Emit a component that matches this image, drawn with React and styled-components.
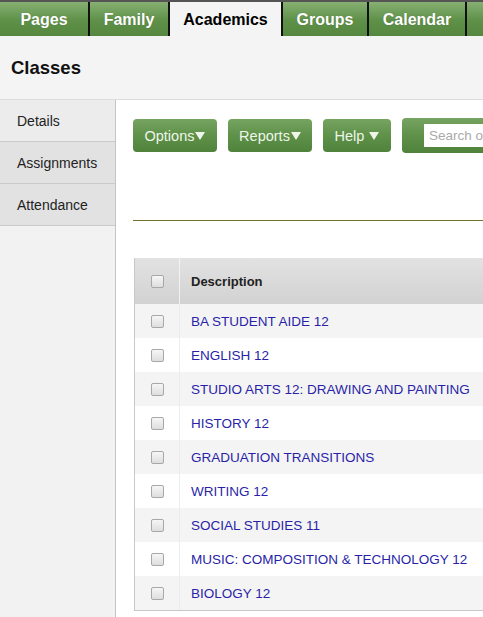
import React from "react";
import styled, { createGlobalStyle } from "styled-components";

const GlobalStyle = createGlobalStyle`
  html, body {
    margin: 0;
    padding: 0;
    background: #f4f4f4;
    font-family: "Liberation Sans", Arial, sans-serif;
    overflow: hidden;
  }
`;

const Page = styled.div`
  width: 483px;
  height: 617px;
  overflow: hidden;
  background: #f4f4f4;
`;

const TabBar = styled.nav`
  display: flex;
  height: 34px;
  border-top: 2px solid #555;
  background: linear-gradient(#86b072, #5e9048 55%, #558740);
`;

const Tab = styled.div`
  display: flex;
  align-items: center;
  justify-content: center;
  flex: none;
  width: ${(p) => p.$w}px;
  padding-top: 2px;
  box-sizing: border-box;
  border-right: 2px solid #111;
  font-size: 16px;
  font-weight: bold;
  color: ${(p) => (p.$active ? "#000" : "#fff")};
  background: ${(p) => (p.$active ? "#f4f4f4" : "transparent")};
  text-shadow: ${(p) => (p.$active ? "none" : "0 0 1px rgba(0,0,0,0.25)")};
`;

const PageHeader = styled.header`
  height: 64px;
  display: flex;
  align-items: center;
  padding-left: 11px;
  font-size: 18.5px;
  font-weight: bold;
  color: #111;
  border-bottom: 1px solid #dcdcdc;
  box-sizing: border-box;
`;

const Body = styled.div`
  display: flex;
  height: 517px;
`;

const Sidebar = styled.aside`
  flex: none;
  width: 115px;
  border-right: 1px solid #c4c4c4;
  background: #f2f2f2;
`;

const SideItem = styled.div`
  height: 41px;
  display: flex;
  align-items: center;
  padding-left: 17px;
  font-size: 14px;
  color: #222;
  background: ${(p) => (p.$first ? "#ececec" : "#e2e2e2")};
  border-bottom: 1px solid #cacaca;
`;

const Content = styled.main`
  flex: 1;
  background: #fff;
  padding: 18px 0 0 17px;
  overflow: hidden;
`;

const Toolbar = styled.div`
  display: flex;
  gap: 11px;
  align-items: center;
  width: 600px;
`;

const GreenButton = styled.div`
  flex: none;
  height: 33px;
  width: ${(p) => p.$w}px;
  box-sizing: border-box;
  border-radius: 4px;
  background: linear-gradient(#76a462, #5f9149 50%, #4f823b);
  display: flex;
  align-items: center;
  justify-content: center;
  color: #eef6ea;
  font-size: 14.5px;
`;

const Caret = styled.span`
  display: inline-block;
  width: 0;
  height: 0;
  border-left: 5px solid transparent;
  border-right: 5px solid transparent;
  border-top: 8px solid #eef6ea;
  margin-left: ${(p) => p.$gap}px;
  margin-top: 1px;
`;

const SearchWrap = styled.div`
  flex: none;
  height: 35px;
  width: 200px;
  box-sizing: border-box;
  border-radius: 4px;
  background: linear-gradient(#76a462, #5f9149 50%, #4f823b);
  display: flex;
  align-items: center;
  padding-left: 22px;
`;

const SearchInput = styled.div`
  height: 23px;
  width: 160px;
  background: #fff;
  color: #aaa;
  font-size: 13.5px;
  display: flex;
  align-items: center;
  padding-left: 5px;
  white-space: nowrap;
`;

const Rule = styled.div`
  width: 600px;
  height: 1px;
  background: #77732f;
  margin-top: 67px;
`;

const Table = styled.div`
  margin-top: 37px;
  margin-left: 1px;
  width: 600px;
  border-left: 1px solid #c8c8c8;
  border-bottom: 1px solid #c8c8c8;
`;

const HeadRow = styled.div`
  display: flex;
  height: 46px;
  background: linear-gradient(#e2e2e2, #d2d2d2);
`;

const Row = styled.div`
  display: flex;
  height: 34px;
  background: ${(p) => (p.$alt ? "#f4f4f4" : "#fff")};
`;

const CheckCell = styled.div`
  flex: none;
  width: 44px;
  display: flex;
  align-items: center;
  justify-content: center;
  border-right: 1px solid ${(p) => (p.$head ? "#f2f2f2" : "#ececec")};
`;

const Box = styled.div`
  width: 11px;
  height: 11px;
  border: 1px solid #a8a8a8;
  border-radius: 2px;
  background: linear-gradient(#f6f6f6, #dedede);
`;

const Cell = styled.div`
  display: flex;
  align-items: center;
  padding-left: 11px;
  font-size: ${(p) => (p.$head ? "13px" : "13.5px")};
  font-weight: ${(p) => (p.$head ? "bold" : "normal")};
  color: ${(p) => (p.$head ? "#222" : "#2a1fa8")};
`;

const tabs = [
  { label: "Pages", w: 90 },
  { label: "Family", w: 80 },
  { label: "Academics", w: 113, active: true },
  { label: "Groups", w: 86 },
  { label: "Calendar", w: 98 },
];

const classes = [
  "BA STUDENT AIDE 12",
  "ENGLISH 12",
  "STUDIO ARTS 12: DRAWING AND PAINTING",
  "HISTORY 12",
  "GRADUATION TRANSITIONS",
  "WRITING 12",
  "SOCIAL STUDIES 11",
  "MUSIC: COMPOSITION & TECHNOLOGY 12",
  "BIOLOGY 12",
];

export default function App() {
  return (
    <Page>
      <GlobalStyle />
      <TabBar>
        {tabs.map((t) => (
          <Tab key={t.label} $w={t.w} $active={t.active}>
            {t.label}
          </Tab>
        ))}
      </TabBar>
      <PageHeader>Classes</PageHeader>
      <Body>
        <Sidebar>
          <SideItem $first>Details</SideItem>
          <SideItem>Assignments</SideItem>
          <SideItem>Attendance</SideItem>
        </Sidebar>
        <Content>
          <Toolbar>
            <GreenButton $w={84}>
              Options<Caret $gap={1} />
            </GreenButton>
            <GreenButton $w={84}>
              Reports<Caret $gap={1} />
            </GreenButton>
            <GreenButton $w={68}>
              Help<Caret $gap={5} />
            </GreenButton>
            <SearchWrap>
              <SearchInput>Search on Description</SearchInput>
            </SearchWrap>
          </Toolbar>
          <Rule />
          <Table>
            <HeadRow>
              <CheckCell $head>
                <Box />
              </CheckCell>
              <Cell $head>Description</Cell>
            </HeadRow>
            {classes.map((c, i) => (
              <Row key={c} $alt={i % 2 === 0}>
                <CheckCell>
                  <Box />
                </CheckCell>
                <Cell>{c}</Cell>
              </Row>
            ))}
          </Table>
        </Content>
      </Body>
    </Page>
  );
}
